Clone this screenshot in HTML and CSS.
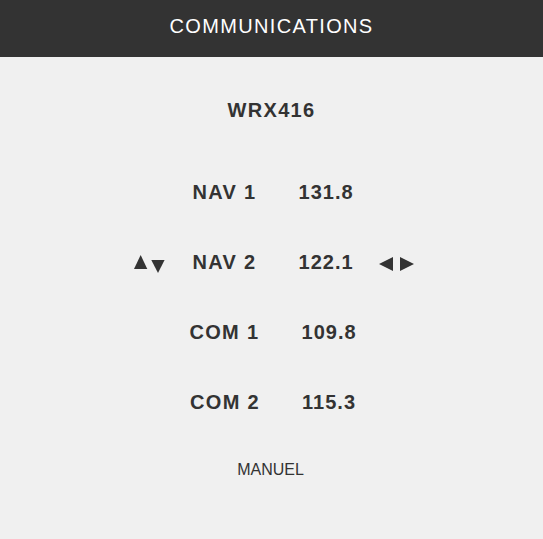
FILE: index.html
```html
<!DOCTYPE html>
<html>
<head>
<meta charset="utf-8">
<link rel="stylesheet" href="styles.css">
</head>
<body>
<header class="topbar">COMMUNICATIONS</header>
<main class="panel">
  <div class="device">WRX416</div>
  <div class="rows">
    <div class="row">
      <div class="pair"><span class="label">NAV 1</span><span class="value">131.8</span></div>
    </div>
    <div class="row">
      <div class="pair">
        <svg class="arrows-v" width="31" height="18" viewBox="0 0 31 18"><polygon points="0,14 6.65,0 13.3,14" fill="#333"/><polygon points="17.3,5 30.6,5 24,18" fill="#333"/></svg>
        <span class="label">NAV 2</span><span class="value">122.1</span>
        <svg class="arrows-h" width="35" height="14" viewBox="0 0 35 14"><polygon points="0,7 14,0 14,14" fill="#333"/><polygon points="21,0 21,14 35,7" fill="#333"/></svg>
      </div>
    </div>
    <div class="row">
      <div class="pair"><span class="label">COM 1</span><span class="value">109.8</span></div>
    </div>
    <div class="row">
      <div class="pair"><span class="label">COM 2</span><span class="value">115.3</span></div>
    </div>
  </div>
  <div class="mode">MANUEL</div>
</main>
</body>
</html>
```
FILE: styles.css
```css
html, body {
  margin: 0;
  padding: 0;
}
body {
  background: #f0f0f0;
  color: #333;
  font-family: "Liberation Sans", Arial, sans-serif;
  width: 543px;
  height: 539px;
  overflow: hidden;
}
.topbar {
  background: #333;
  color: #fff;
  height: 57px;
  box-sizing: border-box;
  padding-bottom: 4px;
  line-height: 53px;
  font-size: 20px;
  letter-spacing: 1.35px;
  text-align: center;
}
.panel {
  display: flex;
  flex-direction: column;
  align-items: center;
  padding-top: 43px;
}
.device {
  font-size: 20px;
  line-height: 20px;
  font-weight: bold;
  letter-spacing: 1.35px;
}
.rows {
  margin-top: 37px;
  display: flex;
  flex-direction: column;
  align-self: stretch;
}
.row {
  height: 70px;
  display: flex;
  align-items: center;
  justify-content: center;
  padding-left: 3px;
}
.pair {
  position: relative;
  display: flex;
  gap: 42px;
  font-size: 20px;
  line-height: 20px;
  font-weight: bold;
  letter-spacing: 1.35px;
}
.value {
  letter-spacing: 1px;
}
.arrows-v {
  position: absolute;
  left: -58px;
  top: 3px;
}
.arrows-h {
  position: absolute;
  right: -60px;
  top: 5px;
}
.mode {
  margin-top: 23px;
  font-size: 16px;
  line-height: 20px;
  padding-right: 2px;
}
```
